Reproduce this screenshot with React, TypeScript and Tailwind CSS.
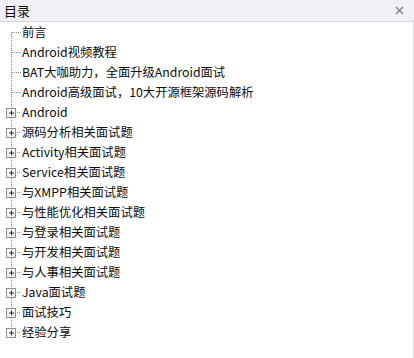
import React from 'react';

const items: { label: string; folder: boolean }[] = [
  { label: '前言', folder: false },
  { label: 'Android视频教程', folder: false },
  { label: 'BAT大咖助力，全面升级Android面试', folder: false },
  { label: 'Android高级面试，10大开源框架源码解析', folder: false },
  { label: 'Android', folder: true },
  { label: '源码分析相关面试题', folder: true },
  { label: 'Activity相关面试题', folder: true },
  { label: 'Service相关面试题', folder: true },
  { label: '与XMPP相关面试题', folder: true },
  { label: '与性能优化相关面试题', folder: true },
  { label: '与登录相关面试题', folder: true },
  { label: '与开发相关面试题', folder: true },
  { label: '与人事相关面试题', folder: true },
  { label: 'Java面试题', folder: true },
  { label: '面试技巧', folder: true },
  { label: '经验分享', folder: true },
];

// Connector drawing for one tree row: dotted trunk, dotted branch, optional +box.
function Connector({ first, last, folder }: { first: boolean; last: boolean; folder: boolean }) {
  const y1 = first ? 10 : 0;
  const y2 = last ? 10 : 20;
  return (
    <svg width="22" height="20" viewBox="0 0 22 20" className="shrink-0">
      <line x1="11.5" y1={y1} x2="11.5" y2={y2} stroke="#8c8c8c" strokeWidth="1" strokeDasharray="1 1" />
      <line x1={folder ? 15 : 12} y1="10.5" x2="21" y2="10.5" stroke="#8c8c8c" strokeWidth="1" strokeDasharray="1 1" />
      {folder && (
        <g>
          <rect x="6.5" y="6.5" width="9" height="9" fill="#f4f4f4" stroke="#8f8f8f" strokeWidth="1" />
          <line x1="9" y1="11" x2="14" y2="11" stroke="#1c2a4a" strokeWidth="1" />
          <line x1="11.5" y1="8.5" x2="11.5" y2="13.5" stroke="#1c2a4a" strokeWidth="1" />
        </g>
      )}
    </svg>
  );
}

export default function App() {
  return (
    <div
      className="flex h-[358px] w-[414px] flex-col bg-white text-[#0c0c0c]"
      style={{ fontFamily: '"Noto Sans CJK SC", "Noto Sans", sans-serif' }}
    >
      <div className="flex h-[22px] shrink-0 items-center justify-between border-b border-[#d4d6d9] bg-[#f0f2f5] pl-[4px] pr-[10px]">
        <span className="text-[13px] leading-none">目录</span>
        <svg width="9" height="9" viewBox="0 0 9 9">
          <path d="M1 1L8 8M8 1L1 8" stroke="#7b8087" strokeWidth="1.4" />
        </svg>
      </div>
      <div className="flex-1 border-r border-[#d4d6d9]">
        <ul className="flex flex-col">
          {items.map((it, i) => (
            <li key={it.label} className="flex h-[20px] items-center">
              <Connector first={i === 0} last={i === items.length - 1} folder={it.folder} />
              <span className="whitespace-nowrap text-[12.3px] leading-none">{it.label}</span>
            </li>
          ))}
        </ul>
      </div>
    </div>
  );
}
